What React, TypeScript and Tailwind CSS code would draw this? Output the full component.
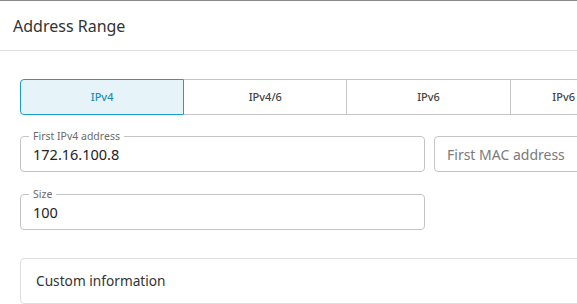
import React from "react";

function Outlined({ label, value, placeholder, w }: { label?: string; value?: string; placeholder?: string; w: string }) {
  return (
    <div className={`relative h-[36px] ${w} shrink-0 rounded-[4px] border border-[#c4c4c4] flex items-center px-[12px]`}>
      {label && (
        <span className="absolute left-[8px] top-[-8px] bg-white px-[4px] text-[10.5px] leading-[14px] text-[#6b6b6b]">
          {label}
        </span>
      )}
      {value ? (
        <span className="text-[14.5px] text-[#222] mt-[2px]">{value}</span>
      ) : (
        <span className="text-[14px] text-[#7a7a7a]">{placeholder}</span>
      )}
    </div>
  );
}

export default function App() {
  const tabs = ["IPv4", "IPv4/6", "IPv6", "IPv6 (stateless)", "Custom"];
  return (
    <div
      className="w-[577px] h-[304px] overflow-hidden bg-white border-t border-[#8a8a8a]"
      style={{ fontFamily: '"Noto Sans", "Open Sans", sans-serif' }}
    >
      <div className="h-[50px] border-b border-[#e0e0e0] flex items-center pl-[13px]">
        <span className="text-[16px] text-[#333] mt-[1px]">Address Range</span>
      </div>
      <div className="pl-[20px] pt-[28px] w-[900px]">
        <div className="flex w-[817px] h-[36px]">
          {tabs.map((t, i) =>
            i === 0 ? (
              <div
                key={t}
                className="flex-1 flex items-center justify-center rounded-l-[4px] border border-[#1b9ec9] bg-[#e6f4fa] text-[11px] font-medium text-[#1b8fb8]"
              >
                {t}
              </div>
            ) : (
              <div
                key={t}
                className="flex-1 flex items-center justify-center border-y border-r border-[#c4c4c4] text-[11px] font-medium text-[#444]"
              >
                {t}
              </div>
            )
          )}
        </div>
        <div className="flex gap-[9px] mt-[21px]">
          <Outlined label="First IPv4 address" value="172.16.100.8" w="w-[405px]" />
          <Outlined placeholder="First MAC address" w="w-[404px]" />
        </div>
        <div className="mt-[22px]">
          <Outlined label="Size" value="100" w="w-[405px]" />
        </div>
        <div className="mt-[28px] w-[817px] h-[46px] rounded-[4px] border border-[#dedede] flex items-center pl-[15px]">
          <span className="text-[13.7px] text-[#333]">Custom information</span>
        </div>
      </div>
    </div>
  );
}
